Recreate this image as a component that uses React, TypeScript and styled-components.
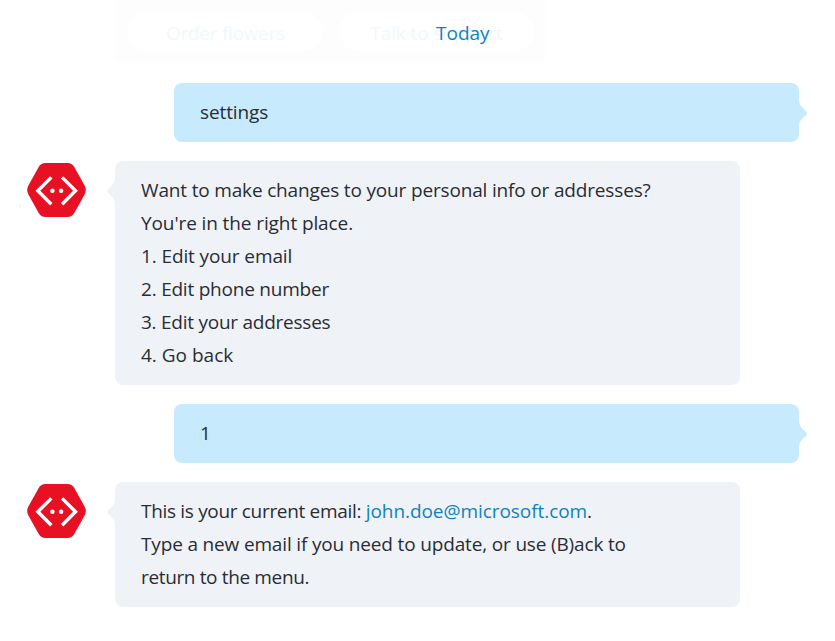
import React from "react";
import styled, { createGlobalStyle } from "styled-components";

const GlobalStyle = createGlobalStyle`
  *, *::before, *::after { box-sizing: border-box; }
  html, body { margin: 0; background: #fff; overflow: hidden; }
`;

const Chat = styled.main`
  width: 835px;
  height: 641px;
  overflow: hidden;
  background: #fff;
  color: #2b2c33;
  font: 400 19px/33px "Open Sans", "Noto Sans", sans-serif;
`;

const Header = styled.header`
  position: relative;
  height: 83px;
  padding-left: 115px;
`;

const FadedCard = styled.div`
  display: flex;
  gap: 16px;
  width: 431px;
  height: 63px;
  padding: 12px 12px 0 13px;
  border-radius: 0 0 7px 7px;
  background: #fdfdfd;
`;

const Pill = styled.div<{ $tracking: number }>`
  width: 195px;
  height: 39px;
  padding-top: 5px;
  border-radius: 20px;
  background: #fff;
  color: #eff8fc;
  text-align: center;
  white-space: nowrap;
  letter-spacing: ${(p) => p.$tracking}px;
`;

const DayLabel = styled.div`
  position: absolute;
  top: 17px;
  left: 436px;
  color: #0f82be;
`;

const Thread = styled.section`
  display: flex;
  flex-direction: column;
  gap: 19px;
`;

const MessageRow = styled.div<{ $mine?: boolean }>`
  display: flex;
  align-items: flex-start;
  padding-left: ${(p) => (p.$mine ? 174 : 27)}px;
`;

const Avatar = styled.svg`
  flex: none;
  width: 59px;
  height: 54px;
  margin: 2px 29px 0 0;
`;

const Bubble = styled.div<{ $mine?: boolean }>`
  position: relative;
  width: 625px;
  padding: 13px 26px;
  border-radius: 8px;
  background: ${(p) => (p.$mine ? "#c7ebfc" : "#eff3f8")};
`;

const Tail = styled.svg<{ $mine?: boolean }>`
  position: absolute;
  top: 16px;
  ${(p) => (p.$mine ? "right: -8px; transform: scaleX(-1);" : "left: -8px;")}
  width: 9px;
  height: 28px;
  fill: ${(p) => (p.$mine ? "#c7ebfc" : "#eff3f8")};
`;

const Line = styled.p<{ $tracking?: number }>`
  margin: 0;
  white-space: nowrap;
  letter-spacing: ${(p) => p.$tracking ?? 0}px;
`;

const MailLink = styled.a`
  color: #0f82be;
  letter-spacing: -0.06px;
  text-decoration: none;
`;

const BotAvatar = () => (
  <Avatar viewBox="0 0 59 54">
    <path
      fill="#e81123"
      d="M18.5 0h22c3 0 5.300 1.300 6.800 3.900l10.300 18.500c1.600 3 1.600 6.200 0 9.200L47.300 50.100C45.800 52.700 43.500 54 40.500 54h-22c-3 0-5.300-1.300-6.800-3.900L1.400 31.600c-1.600-3-1.600-6.200 0-9.200L11.700 3.900C13.200 1.300 15.500 0 18.500 0z"
    />
    <path
      fill="none"
      stroke="#fff"
      strokeWidth="3.4"
      d="M24.300 14.400 10.900 27.700 24.300 41.200M35.100 14.400 48.500 27.700 35.100 41.200"
    />
    <circle cx="25.400" cy="27.800" r="2.250" fill="#fff" />
    <circle cx="34.100" cy="27.800" r="2.250" fill="#fff" />
  </Avatar>
);

type MessageProps = { mine?: boolean; children: React.ReactNode };

const Message = ({ mine, children }: MessageProps) => (
  <MessageRow $mine={mine}>
    {!mine && <BotAvatar />}
    <Bubble $mine={mine}>
      <Tail $mine={mine} viewBox="0 0 9 28">
        <path d="M9 0H8C8 5 6.200 7.500 2.500 10.800L.6 12.500Q-.5 14 .6 15.500L2.500 17.200C6.200 20.500 8 23 8 28H9z" />
      </Tail>
      {children}
    </Bubble>
  </MessageRow>
);

export default function App() {
  return (
    <Chat>
      <GlobalStyle />
      <Header>
        <FadedCard>
          <Pill $tracking={-0.25}>Order flowers</Pill>
          <Pill $tracking={-0.1}>Talk to support</Pill>
        </FadedCard>
        <DayLabel>Today</DayLabel>
      </Header>
      <Thread>
        <Message mine>
          <Line $tracking={-0.12}>settings</Line>
        </Message>
        <Message>
          <Line $tracking={-0.165}>Want to make changes to your personal info or addresses?</Line>
          <Line $tracking={-0.1}>You're in the right place.</Line>
          <Line $tracking={-0.11}>1. Edit your email</Line>
          <Line $tracking={-0.22}>2. Edit phone number</Line>
          <Line $tracking={-0.25}>3. Edit your addresses</Line>
          <Line>4. Go back</Line>
        </Message>
        <Message mine>
          <Line>1</Line>
        </Message>
        <Message>
          <Line $tracking={-0.32}>
            This is your current email: <MailLink>john.doe@microsoft.com</MailLink>.
          </Line>
          <Line $tracking={-0.16}>Type a new email if you need to update, or use (B)ack to</Line>
          <Line $tracking={-0.36}>return to the menu.</Line>
        </Message>
      </Thread>
    </Chat>
  );
}
